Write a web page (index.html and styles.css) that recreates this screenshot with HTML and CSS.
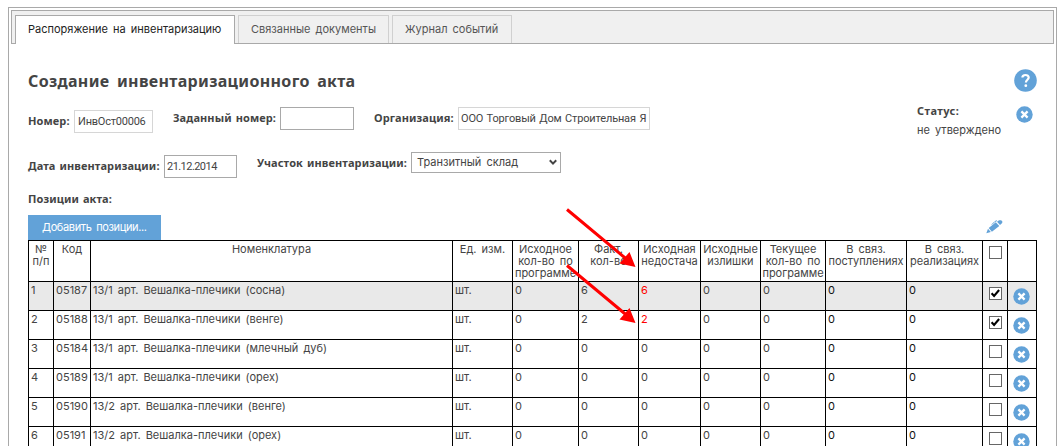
FILE: index.html
```html
<!DOCTYPE html>
<html lang="ru">
<head>
<meta charset="utf-8">
<title>Создание инвентаризационного акта</title>
<link rel="stylesheet" href="styles.css">
</head>
<body>
<svg class="defs" width="0" height="0">
  <symbol id="close" viewBox="0 0 17 17"><circle cx="8.5" cy="8.5" r="8.2" fill="#62a2d8"/><path d="M5.4 5.4l6.2 6.2M11.6 5.4l-6.2 6.2" stroke="#fff" stroke-width="2.3"/></symbol>
  <symbol id="tick" viewBox="0 0 13 13"><path d="M2.6 6.2l2.5 2.8 5-6" fill="none" stroke="#000" stroke-width="2.1"/></symbol>
</svg>
<div class="panel">
  <nav class="tabs">
    <a class="tab active"><span>Распоряжение на инвентаризацию</span></a>
    <a class="tab"><span>Связанные документы</span></a>
    <a class="tab"><span>Журнал событий</span></a>
  </nav>
  <main class="content">
    <header class="head">
      <h1><span>Создание инвентаризационного акта</span></h1>
      <svg class="help" viewBox="0 0 23 23"><circle cx="11.5" cy="11.5" r="11.3" fill="#62a2d8"/><path d="M8.4 8.6C8.4 6.8 9.8 6 11.5 6s3.2.9 3.2 2.6c0 2.1-2.8 2.3-2.8 4.9" fill="none" stroke="#fff" stroke-width="2.2"/><circle cx="11.8" cy="16.7" r="1.4" fill="#fff"/></svg>
    </header>
    <div class="row first">
      <div class="field low number"><b>Номер:</b><span class="box ro">ИнвОст00006</span></div>
      <div class="field custom"><b>Заданный номер:</b><span class="box"></span></div>
      <div class="field org"><b>Организация:</b><span class="box ro">ООО Торговый Дом Строительная Я</span></div>
      <div class="status"><b>Статус:</b><span>не утверждено</span></div>
      <svg class="x cancel"><use href="#close"/></svg>
    </div>
    <div class="row second">
      <div class="field low date"><b>Дата инвентаризации:</b><span class="box">21.12.2014</span></div>
      <div class="field place"><b>Участок инвентаризации:</b><span class="box select">Транзитный склад<svg viewBox="0 0 8 7"><path d="M.8 1.2L4 4.6l3.2-3.4" fill="none" stroke="#444" stroke-width="2"/></svg></span></div>
    </div>
    <div class="caption"><b>Позиции акта:</b></div>
    <div class="actions">
      <span class="add"><span>Добавить позиции...</span></span>
      <svg class="pen" viewBox="0 0 17 14"><path d="M.3 13.200L2 8.800l2.800 3.200zM2.700 8L9.800 2.300l3.500 3.800-7.400 5.700zM11 1.700l1.700-1.200c1.500-.8 3.800-.3 3.700 1.500 0 .7-.4 1.300-1 1.800L14 5.100z" fill="#62a2d8"/><path d="M5.800 4.600L8.900 1.500l2-.8" fill="none" stroke="#62a2d8"/></svg>
    </div>
    <div class="grid" id="grid">
      <div class="tr th"><div>№<br>п/п</div><div>Код</div><div class="nm">Номенклатура</div><div>Ед. изм.</div><div>Исходное<br>кол-во по<br>программе</div><div>Факт.<br>кол-во</div><div>Исходная<br>недостача</div><div>Исходные<br>излишки</div><div>Текущее<br>кол-во по<br>программе</div><div>В связ.<br>поступлениях</div><div>В связ.<br>реализациях</div><div><i class="check"></i></div><div></div></div>
    </div>
  </main>
</div>
<svg class="arrows" viewBox="0 0 1062 446"><path d="M567 209.500L627 259.500M567 265.500L627 315.500" stroke="#f00" stroke-width="3"/><path d="M635.500 267l-16-3.500 10-11.500zM635.500 323l-16-3.500 10-11.500z" fill="#f00"/></svg>
<script src="grid.js"></script>
</body>
</html>
```
FILE: styles.css
```css
* { box-sizing: border-box; }
body { margin: 0; height: 446px; overflow: hidden; background: #fff; color: #444; font: 11px/12px Inter, "Liberation Sans", sans-serif; word-spacing: 2px; position: relative; }
.defs { position: absolute; }
b, h1 { font-family: "Noto Sans", sans-serif; font-weight: 700; }
b { font-size: 11px; white-space: nowrap; letter-spacing: .1px; word-spacing: 1px; }
.panel { margin: 7px 5px 0 8px; border: 1px solid #a9a9a9; height: 460px; padding: 2px; }
.tabs { display: flex; height: 34px; background: #f0f0f0; border: 1px solid #a9a9a9; padding: 4px 0 0 3px; gap: 3px; }
.tab { height: 28px; border: 1px solid #d0d0d0; border-bottom: 0; padding: 6px 0 0 12px; color: #555; white-space: nowrap; line-height: 14px; }
.tab:nth-child(1) { width: 220px; }
.tab:nth-child(2) { width: 151px; }
.tab:nth-child(3) { width: 120px; }
.tab.active { height: 29px; background: #fff; border-color: #a9a9a9; color: #222; }
.content { padding: 25px 0 0 17px; }
.head { display: flex; width: 1009px; height: 38px; justify-content: space-between; }
h1 { margin: 1px 0 0; font-size: 16px; line-height: 22px; white-space: nowrap; letter-spacing: .33px; word-spacing: 3px; }
.help { width: 23px; height: 23px; }
.row { display: flex; align-items: flex-start; }
.first { height: 45px; }
.second { height: 39px; }
.field { display: flex; align-items: center; height: 23px; white-space: nowrap; }
.field b { padding-bottom: 2px; }
.low { margin-top: 3px; }
.box { border: 1px solid #a9a9a9; height: 23px; padding: 0 2px; line-height: 21px; font-family: Roboto, sans-serif; font-size: 11px; letter-spacing: -.22px; word-spacing: 1px; overflow: hidden; }
.ro { border-color: #d6d6d6; }
.number { width: 145px; }
.number b { width: 46px; }
.number .box { width: 79px; padding-left: 3px; }
.custom { width: 201px; }
.custom b { width: 107px; }
.custom .box { width: 74px; }
.org { width: 543px; }
.org b { width: 84px; }
.org .box { width: 192px; letter-spacing: -.16px; }
.status { width: 99px; display: flex; flex-direction: column; gap: 7px; margin-top: -2px; }
.status b { letter-spacing: .4px; }
.x { width: 17px; height: 17px; display: block; }
.cancel { margin-top: -1px; }
.date { width: 229px; }
.date b { width: 136px; }
.date .box { width: 73px; letter-spacing: -.55px; }
.place b { width: 154px; }
.place .box { width: 150px; height: 21px; line-height: 19px; padding: 0 3px 0 5px; font-family: Inter, sans-serif; letter-spacing: 0; word-spacing: 2px; margin-top: -2px; }
.select { display: flex; justify-content: space-between; align-items: center; }
.select svg { width: 8px; height: 7px; }
.caption { height: 24px; padding-top: 2px; }
.actions { display: flex; justify-content: space-between; width: 975px; height: 25px; }
.add { width: 133px; background: #62a2d8; color: #fff; line-height: 25px; padding-left: 14px; white-space: nowrap; letter-spacing: -.37px; }
.pen { width: 17px; height: 14px; margin-top: 5px; }
.tr { display: grid; width: 1009px; grid-template-columns: 25px 37px 362px 60px 66px 60px 62px 60px 65px 81px 76px 25px 30px; height: 29px; }
.tr > div { border-left: 1px solid #000; border-top: 1px solid #000; padding: 2px 0 0 2px; white-space: nowrap; }
.tr > div:last-child { border-right: 1px solid #000; }
.tr:not(.th) > div:nth-child(10), .tr:not(.th) > div:nth-child(11) { color: #111; }
.th { height: 41px; text-align: center; }
.th > div { padding-left: 0; }
.sel { background: #e9e9e9; }
.red { color: #f00; }
.check { display: block; width: 13px; height: 13px; border: 1px solid #666; background: #fff; margin: 3px 0 0 4px; }
.th .check { margin-left: 6px; }
.check svg { display: block; width: 13px; height: 13px; margin: -1px; }
.tr .x { margin: 4px 0 0 3px; }
.arrows { position: absolute; left: 0; top: 0; width: 1062px; height: 446px; pointer-events: none; }
```
FILE: grid.js
```js
const rows = [
  ['05187', '13/1 арт. Вешалка-плечики (сосна)', 6],
  ['05188', '13/1 арт. Вешалка-плечики (венге)', 2],
  ['05184', '13/1 арт. Вешалка-плечики (млечный дуб)', 0],
  ['05189', '13/1 арт. Вешалка-плечики (орех)', 0],
  ['05190', '13/2 арт. Вешалка-плечики (венге)', 0],
  ['05191', '13/2 арт. Вешалка-плечики (орех)', 0]
];
const grid = document.getElementById('grid');
rows.forEach(([code, name, qty], i) => {
  const tick = qty ? '<svg><use href="#tick"/></svg>' : '';
  const cells = [i + 1, code, name, 'шт.', 0, qty, qty ? `<span class="red">${qty}</span>` : 0, 0, 0, 0, 0,
    `<i class="check">${tick}</i>`, '<svg class="x"><use href="#close"/></svg>'];
  grid.insertAdjacentHTML('beforeend', `<div class="tr${i ? '' : ' sel'}">${cells.map(c => `<div>${c}</div>`).join('')}</div>`);
});
```
